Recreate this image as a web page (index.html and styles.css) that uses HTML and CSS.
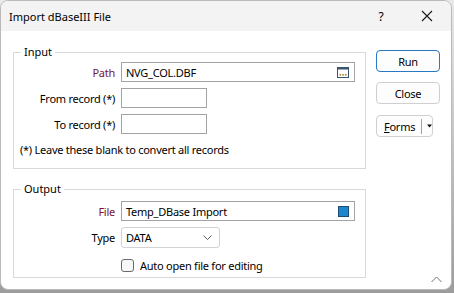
FILE: index.html
```html
<!DOCTYPE html>
<html>
<head>
<meta charset="utf-8">
<link rel="stylesheet" href="styles.css">
</head>
<body>
<div class="window">
  <div class="titlebar">
    <span class="title">Import dBaseIII File</span>
    <span class="help">?</span>
    <svg class="close-x" width="12" height="12" viewBox="0 0 12 12"><path d="M1 1 L11 11 M11 1 L1 11" stroke="#1a1a1a" stroke-width="1.1" fill="none"/></svg>
  </div>
  <div class="content">
    <div class="groups">
      <div class="group group-input">
        <span class="legend">Input</span>
        <div class="row">
          <label class="lbl req">Path</label>
          <div class="field wide"><span>NVG_COL.DBF</span>
            <svg class="browse" width="12" height="11" viewBox="0 0 12 11"><rect x="0.5" y="0.5" width="11" height="10" fill="#fff" stroke="#3a5570"/><rect x="0.5" y="0.5" width="11" height="2" fill="#3a5570"/><rect x="2.5" y="7" width="1.6" height="1.6" fill="#b5832a"/><rect x="5.2" y="7" width="1.6" height="1.6" fill="#b5832a"/><rect x="7.9" y="7" width="1.6" height="1.6" fill="#b5832a"/></svg>
          </div>
        </div>
        <div class="row">
          <label class="lbl">From record (*)</label>
          <div class="field short"></div>
        </div>
        <div class="row">
          <label class="lbl">To record (*)</label>
          <div class="field short"></div>
        </div>
        <div class="note">(*) Leave these blank to convert all records</div>
      </div>
      <div class="group group-output">
        <span class="legend">Output</span>
        <div class="row">
          <label class="lbl req">File</label>
          <div class="field wide"><span>Temp_DBase Import</span><span class="swatch"></span></div>
        </div>
        <div class="row">
          <label class="lbl">Type</label>
          <div class="combo"><span>DATA</span>
            <svg width="9" height="5" viewBox="0 0 9 5"><path d="M0.5 0.5 L4.5 4.5 L8.5 0.5" stroke="#606060" stroke-width="1" fill="none"/></svg>
          </div>
        </div>
        <div class="row check-row">
          <span class="lbl"></span>
          <span class="checkbox"></span>
          <span class="check-label">Auto open file for editing</span>
        </div>
      </div>
    </div>
    <div class="buttons">
      <div class="btn default">Run</div>
      <div class="btn">Close</div>
      <div class="btn split"><span class="split-text"><u>F</u>orms</span><span class="divider"></span><svg width="7" height="4" viewBox="0 0 7 4"><path d="M0 0 H7 L3.5 4 Z" fill="#111"/></svg></div>
    </div>
  </div>
  <svg class="grip" width="11" height="7" viewBox="0 0 11 7"><path d="M0.5 6 L5.5 1 L10.5 6" stroke="#707070" stroke-width="1" fill="none"/></svg>
</div>
</body>
</html>
```
FILE: styles.css
```css
* { box-sizing: border-box; }
html, body { margin: 0; padding: 0; }
body {
  width: 454px;
  height: 293px;
  background: linear-gradient(#e9e9e9, #9c9c9c);
  font-family: "Noto Sans", "Open Sans", sans-serif;
  font-size: 11px;
  letter-spacing: -0.25px;
  color: #000;
  overflow: hidden;
}
.window {
  position: relative;
  width: 452px;
  height: 290px;
  background: #fff;
  border: 1px solid #b9b9b9;
  border-radius: 8px;
  overflow: hidden;
}
.titlebar {
  height: 30px;
  background: #f3f3f3;
  display: flex;
  align-items: center;
  padding-left: 8px;
}
.title { flex: 1; font-size: 11px; letter-spacing: 0; }
.help { width: 46px; text-align: center; font-size: 12px; margin-right: 1px; }
.close-x { margin: 0 18px 0 16px; }
.content {
  display: flex;
  align-items: flex-start;
  padding-left: 12px;
}
.groups {
  margin-top: 21px;
  display: flex;
  flex-direction: column;
  gap: 20px;
}
.group {
  position: relative;
  width: 353px;
  border: 1px solid #d9d9d9;
  display: flex;
  flex-direction: column;
  gap: 6px;
}
.group-input { height: 117px; padding-top: 9px; }
.group-output { height: 89px; padding-top: 11px; }
.legend {
  position: absolute;
  top: -9px;
  left: 7px;
  padding: 0 3px;
  background: #fff;
  line-height: 16px;
  letter-spacing: 0;
}
.row {
  display: flex;
  align-items: center;
  height: 20px;
}
.lbl {
  width: 101px;
  text-align: right;
  margin-right: 6px;
  white-space: nowrap;
}
.lbl.req { color: #7d1232; }
.field {
  height: 20px;
  border: 1px solid #a3a3a3;
  background: #fff;
  display: flex;
  align-items: center;
  padding-left: 4px;
}
.field.wide { width: 234px; justify-content: space-between; padding-right: 5px; }
.field.short { width: 86px; }
.browse { margin-top: 1px; }
.swatch {
  width: 11px;
  height: 11px;
  background: #1e86cf;
  border: 1px solid #1d4c73;
}
.note {
  margin-top: 2px;
  padding-left: 6px;
  line-height: 16px;
  white-space: nowrap;
}
.combo {
  width: 99px;
  height: 21px;
  border: 1px solid #d3d3d3;
  border-radius: 3px;
  display: flex;
  align-items: center;
  justify-content: space-between;
  padding: 0 7px 0 4px;
}
.check-row { margin-top: 2px; }
.checkbox {
  width: 13px;
  height: 13px;
  border: 1px solid #6a6a6a;
  border-radius: 3px;
  background: #f7f7f7;
  margin-right: 6px;
}
.buttons {
  margin-top: 19px;
  margin-left: 10px;
  display: flex;
  flex-direction: column;
  gap: 10px;
}
.btn {
  width: 64px;
  height: 22px;
  border: 1px solid #d0d0d0;
  border-radius: 4px;
  background: #fdfdfd;
  display: flex;
  align-items: center;
  justify-content: center;
}
.btn.default { border-color: #2a78c2; }
.btn.split {
  width: 57px;
  margin-top: 1px;
  justify-content: flex-start;
  padding-left: 7px;
}
.split-text u { text-decoration-thickness: 1px; }
.divider {
  width: 1px;
  height: 15px;
  background: #a0a0a0;
  margin: 0 5px 0 6px;
}
.grip { position: absolute; right: 9px; bottom: 6px; }
```
